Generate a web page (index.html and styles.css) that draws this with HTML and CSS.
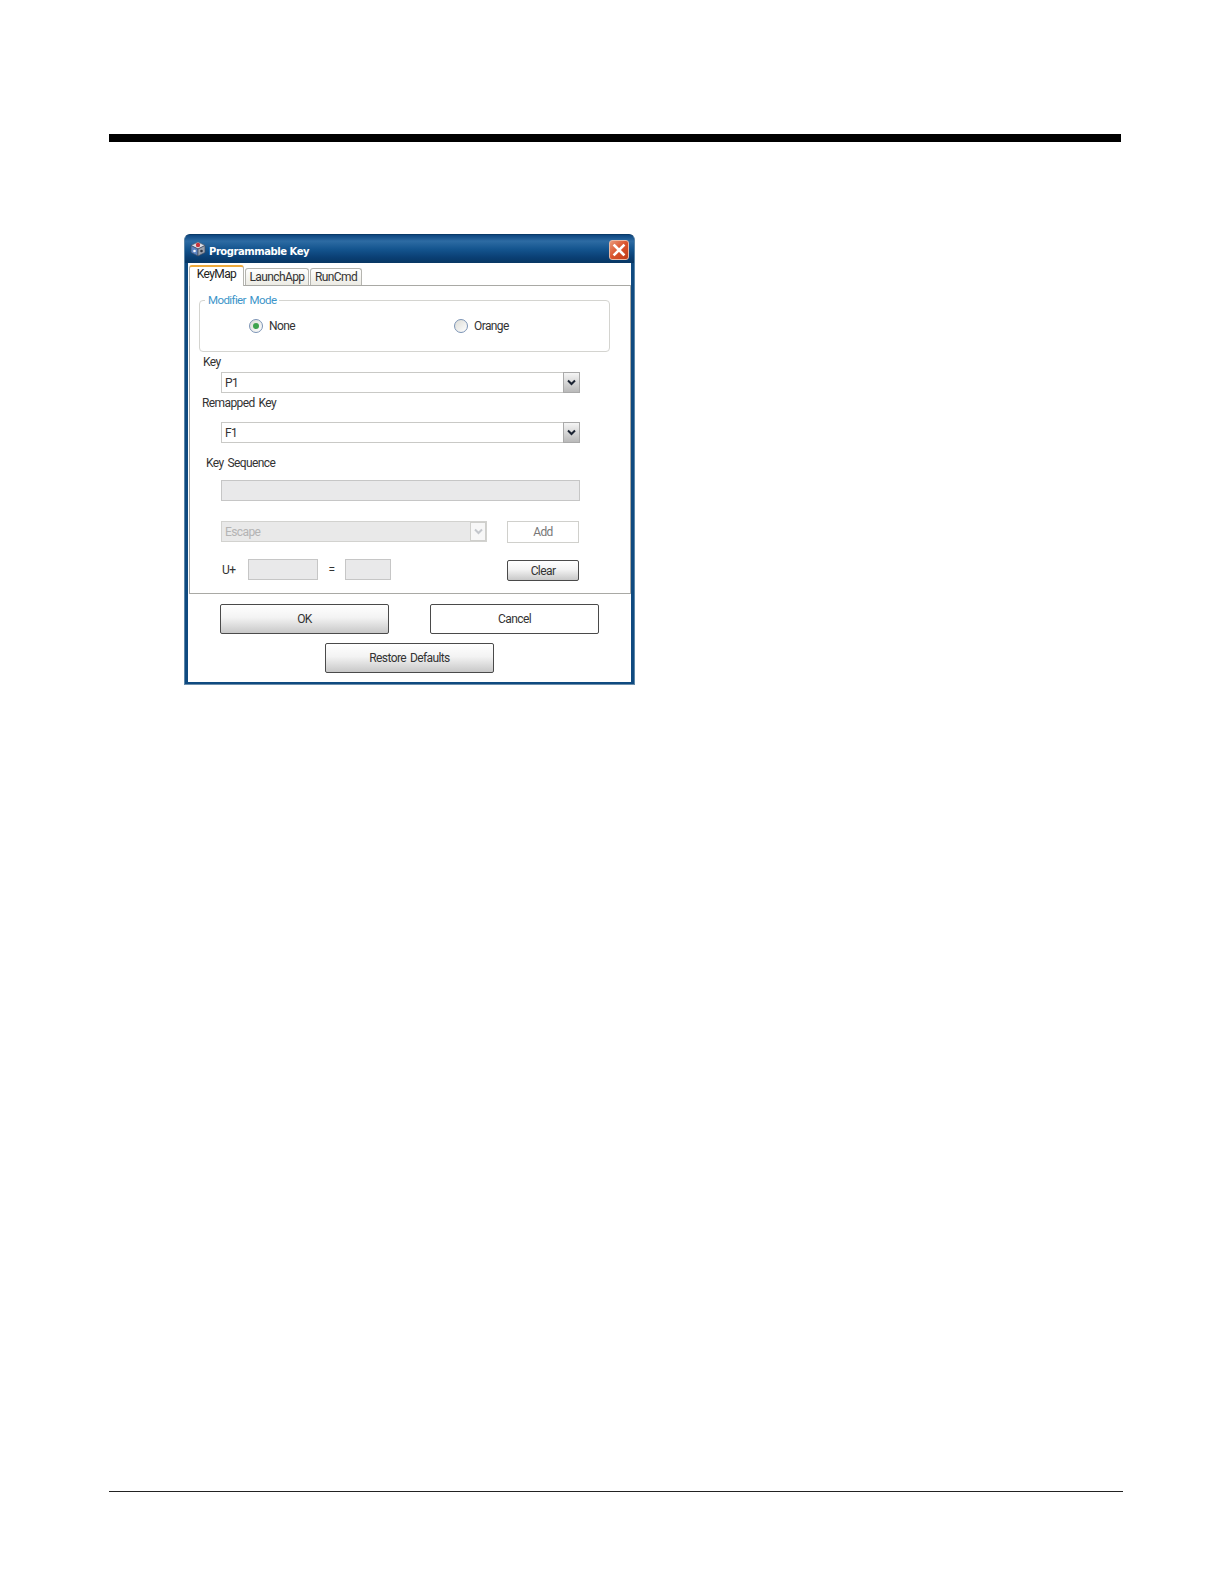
FILE: index.html
```html
<!DOCTYPE html>
<html lang="en">
<head>
    <meta charset="UTF-8">
    <title>Programmable Key</title>
    <link rel="stylesheet" href="styles.css">
</head>
<body>

<div class="top-rule"></div>

<div class="dialog">
    <div class="title-bar">
        <svg class="app-icon" width="16" height="16" viewBox="0 0 16 16">
            <path d="M8 1 L15 4.5 L8 8 L1 4.5 Z" fill="#dfe3ea" stroke="#59606e" stroke-width="0.7"/>
            <path d="M1 4.5 L8 8 L8 15 L1 11.5 Z" fill="#5b84c4" stroke="#3f4a60" stroke-width="0.7"/>
            <path d="M15 4.5 L8 8 L8 15 L15 11.5 Z" fill="#9aa1ad" stroke="#3f4a60" stroke-width="0.7"/>
            <circle cx="8" cy="4" r="2.2" fill="#c8343c"/>
            <circle cx="4.5" cy="10" r="1.3" fill="#f4f6fb"/>
            <circle cx="11.5" cy="10" r="1.3" fill="#2e3442"/>
        </svg>
        <span class="title-text">Programmable Key</span>
        <div class="close-btn">
            <svg width="14" height="14" viewBox="0 0 14 14">
                <path d="M2.5 2.5 L11.5 11.5 M11.5 2.5 L2.5 11.5" stroke="#fff" stroke-width="2.6" stroke-linecap="square"/>
            </svg>
        </div>
    </div>

    <div class="client">
        <div class="tabs">
            <div class="tab tab-active">KeyMap</div>
            <div class="tab tab-launch">LaunchApp</div>
            <div class="tab tab-run">RunCmd</div>
        </div>

        <div class="panel">
            <fieldset class="group">
                <legend>Modifier Mode</legend>
                <div class="radio radio-none">
                    <span class="radio-dot radio-checked"></span>
                    <span>None</span>
                </div>
                <div class="radio radio-orange">
                    <span class="radio-dot"></span>
                    <span>Orange</span>
                </div>
            </fieldset>

            <div class="label label-key">Key</div>
            <div class="combo combo-wide combo-key">
                <span class="combo-text">P1</span>
                <span class="combo-arrow">
                    <svg width="9" height="7" viewBox="0 0 9 7"><path d="M1 1.5 L4.5 5 L8 1.5" fill="none" stroke="#1c2433" stroke-width="2"/></svg>
                </span>
            </div>

            <div class="label label-remap">Remapped Key</div>
            <div class="combo combo-wide combo-remap">
                <span class="combo-text">F1</span>
                <span class="combo-arrow">
                    <svg width="9" height="7" viewBox="0 0 9 7"><path d="M1 1.5 L4.5 5 L8 1.5" fill="none" stroke="#1c2433" stroke-width="2"/></svg>
                </span>
            </div>

            <div class="label label-seq">Key Sequence</div>
            <div class="field-disabled field-seq"></div>

            <div class="row row-escape">
                <div class="combo combo-disabled">
                    <span class="combo-text">Escape</span>
                    <span class="combo-arrow arrow-disabled">
                        <svg width="9" height="7" viewBox="0 0 9 7"><path d="M1 1.5 L4.5 5 L8 1.5" fill="none" stroke="#c4c7cc" stroke-width="2"/></svg>
                    </span>
                </div>
                <div class="btn-add">Add</div>
            </div>

            <div class="row row-unicode">
                <span class="u-label">U+</span>
                <div class="field-disabled field-hex"></div>
                <span class="eq-label">=</span>
                <div class="field-disabled field-char"></div>
                <div class="btn btn-clear">Clear</div>
            </div>
        </div>

        <div class="actions">
            <div class="btn btn-big">OK</div>
            <div class="btn btn-big btn-flat">Cancel</div>
        </div>
        <div class="actions-restore">
            <div class="btn btn-big">Restore Defaults</div>
        </div>
    </div>
</div>

<div class="bottom-rule"></div>

</body>
</html>
```

FILE: styles.css
```css
* {
    box-sizing: border-box;
}

body {
    margin: 0;
    height: 1584px;
    padding-top: 134px;
    background-color: #fff;
    color: #333;
    font-family: Roboto, "Liberation Sans", sans-serif;
    font-size: 12px;
    letter-spacing: -0.6px;
    word-spacing: 1.5px;
    overflow: hidden;
}

.top-rule {
    width: 1012px;
    height: 8px;
    margin-left: 109px;
    background-color: #000;
}

.bottom-rule {
    width: 1014px;
    height: 1px;
    margin: 806px 0 0 109px;
    background-color: #222;
}

.dialog {
    width: 451px;
    height: 451px;
    margin: 92px 0 0 184px;
    padding: 0 3px 2px;
    background-color: #0f4a80;
    border: 1px solid #5c86a8;
    border-top-color: #0a3a68;
    border-bottom-color: #6d8fac;
    border-radius: 6px 6px 0 0;
}

.title-bar {
    display: flex;
    align-items: center;
    height: 28px;
    margin: 0 -3px;
    padding: 0 5px;
    background: linear-gradient(#0d4680 0%, #2d6ba3 22%, #14558f 50%, #0a3f74 80%, #083763 100%);
    border-radius: 5px 5px 0 0;
}

.app-icon {
    margin-right: 3px;
}

.title-text {
    color: #fff;
    font-family: "DejaVu Sans", sans-serif;
    font-size: 10px;
    font-weight: bold;
    letter-spacing: -0.45px;
    word-spacing: 0;
    padding-top: 4px;
}

.close-btn {
    display: flex;
    align-items: center;
    justify-content: center;
    width: 20px;
    height: 20px;
    margin-left: auto;
    margin-top: 2px;
    background: linear-gradient(135deg, #ea9a7c, #d9532c 50%, #c13d1a);
    border: 1px solid #e9b9a5;
    border-radius: 3px;
}

.client {
    height: 419px;
    background-color: #fff;
}

.tabs {
    display: flex;
    align-items: flex-end;
    height: 22px;
    padding-left: 1px;
}

.tab {
    height: 17px;
    margin-left: 1px;
    text-align: center;
    line-height: 16px;
    background: linear-gradient(#fff, #ecebe4);
    border: 1px solid #b5b5b0;
    border-bottom: none;
    border-radius: 3px 3px 0 0;
}

.tab-active {
    position: relative;
    width: 55px;
    height: 21px;
    margin-left: 0;
    margin-bottom: -1px;
    line-height: 15px;
    background: #fff;
    border-top: 2px solid #eeaa3c;
    color: #222;
}

.tab-launch {
    width: 64px;
}

.tab-run {
    width: 52px;
}

.panel {
    width: 442px;
    height: 309px;
    margin-left: 1px;
    padding: 8px 0 0 9px;
    background-color: #fff;
    border: 1px solid #a9a9a5;
}

.group {
    display: flex;
    width: 411px;
    min-width: 0;
    height: 58px;
    margin: 0;
    padding: 0;
    border: 1px solid #d4d4d0;
    border-radius: 4px;
}

.group legend {
    margin-left: 5px;
    padding: 0 3px;
    color: #3d95c9;
    font-size: 11.5px;
    line-height: 13px;
}

.radio {
    display: flex;
    align-items: center;
    gap: 6px;
    height: 14px;
    margin-top: 12px;
}

.radio-none {
    width: 205px;
    margin-left: 49px;
}

.radio-dot {
    display: flex;
    align-items: center;
    justify-content: center;
    width: 14px;
    height: 14px;
    background: linear-gradient(135deg, #dcdcd6, #fff);
    border: 1.5px solid #7b93b5;
    border-radius: 50%;
}

.radio-checked::after {
    content: "";
    width: 6px;
    height: 6px;
    background-color: #3fa34d;
    border-radius: 50%;
}

.label {
    height: 14px;
    line-height: 14px;
}

.label-key {
    margin: 3px 0 0 4px;
}

.label-remap {
    margin: 3px 0 0 3px;
}

.label-seq {
    margin: 13px 0 0 7px;
}

.combo {
    display: flex;
    align-items: center;
    height: 21px;
    margin-left: 22px;
    padding-left: 3px;
    background-color: #fff;
    border: 1px solid #c9c9c6;
}

.combo-wide {
    width: 359px;
}

.combo-key {
    margin-top: 3px;
}

.combo-remap {
    margin-top: 12px;
}

.combo-text {
    flex: 1;
}

.combo-arrow {
    display: flex;
    align-self: stretch;
    align-items: center;
    justify-content: center;
    width: 17px;
    margin: -1px -1px -1px 0;
    background: linear-gradient(#f5f5f5, #b9b9b9);
    border: 1px solid #a9a9a9;
}

.combo-disabled {
    width: 266px;
    background-color: #e9e9e9;
    border-color: #d2d2cf;
    color: #b4b4b4;
}

.arrow-disabled {
    width: 16px;
    margin: 0;
    background: #f7f7f7;
    border-color: #cfcfcc;
}

.field-disabled {
    height: 21px;
    background-color: #e9e9ea;
    border: 1px solid #c6c6c6;
}

.field-seq {
    width: 359px;
    margin: 10px 0 0 22px;
}

.row {
    display: flex;
    align-items: flex-start;
}

.row-escape {
    margin-top: 20px;
}

.row-unicode {
    margin-top: 16px;
}

.btn-add {
    width: 72px;
    height: 22px;
    margin-left: 20px;
    line-height: 21px;
    text-align: center;
    color: #777;
    background-color: #fff;
    border: 1px solid #d0d0cc;
}

.u-label {
    width: 26px;
    margin-left: 23px;
    line-height: 23px;
}

.field-hex {
    width: 70px;
}

.eq-label {
    width: 27px;
    text-align: center;
    line-height: 23px;
}

.field-char {
    width: 46px;
}

.btn {
    text-align: center;
    background: linear-gradient(#fff, #f3f3f3 45%, #c8c8c8);
    border: 1px solid #4a4a4a;
    border-radius: 2px;
}

.btn-clear {
    width: 72px;
    height: 21px;
    margin: 1px 0 0 116px;
    line-height: 20px;
}

.actions {
    display: flex;
    gap: 41px;
    margin: 10px 0 0 32px;
}

.actions-restore {
    margin: 9px 0 0 137px;
}

.btn-big {
    width: 169px;
    height: 30px;
    line-height: 28px;
}

.btn-flat {
    background: #fff;
}
```
